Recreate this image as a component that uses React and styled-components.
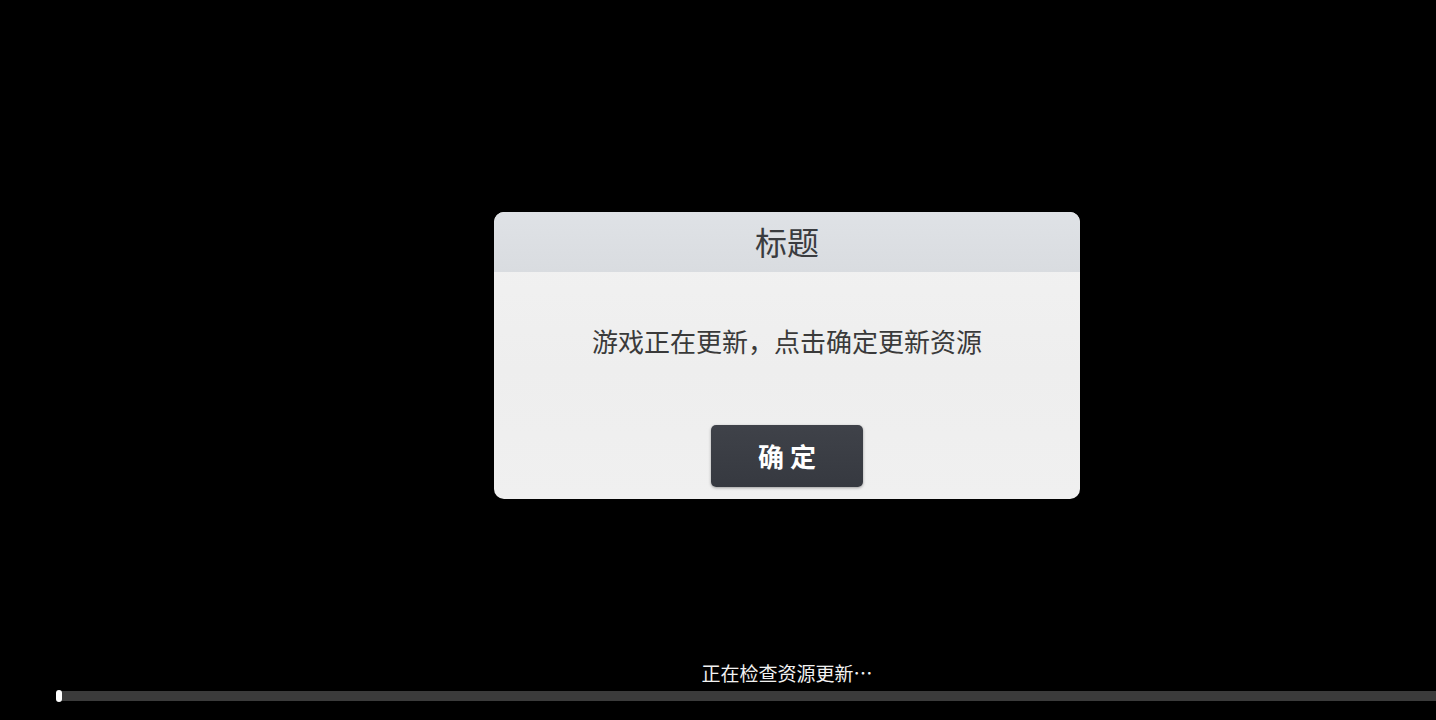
import React from "react";
import styled, { createGlobalStyle } from "styled-components";

const GlobalStyle = createGlobalStyle`
  html, body {
    margin: 0;
    padding: 0;
    background: #000;
    overflow: hidden;
  }
  body {
    font-family: "Noto Sans CJK SC", "Noto Sans", sans-serif;
  }
`;

const Viewport = styled.div`
  width: 100vw;
  height: 100vh;
  overflow: hidden;
`;

// 游戏画布比窗口宽，居中点在 787px
const Stage = styled.div`
  width: 1574px;
  height: 720px;
  display: flex;
  flex-direction: column;
  align-items: center;
  background: #000;
`;

const Dialog = styled.div`
  margin-top: 212px;
  width: 586px;
  height: 287px;
  border-radius: 10px;
  overflow: hidden;
  display: flex;
  flex-direction: column;
  background: linear-gradient(180deg, #f2f2f2 0%, #eeeeee 55%, #f0f0f0 100%);
`;

const Header = styled.div`
  height: 60px;
  flex-shrink: 0;
  display: flex;
  align-items: center;
  justify-content: center;
  background: linear-gradient(180deg, #dfe2e6 0%, #d9dce0 100%);
`;

const Title = styled.div`
  font-size: 32px;
  line-height: 40px;
  color: #3a3c3f;
  font-weight: 400;
  padding-bottom: 2px;
`;

const Body = styled.div`
  flex: 1;
  display: flex;
  flex-direction: column;
  align-items: center;
  padding-top: 51px;
`;

const Message = styled.div`
  font-size: 26px;
  line-height: 36px;
  color: #3a3a3a;
`;

const ConfirmButton = styled.button`
  margin-top: 66px;
  width: 152px;
  height: 62px;
  border: none;
  border-radius: 5px;
  background: linear-gradient(180deg, #3f4249 0%, #363940 100%);
  box-shadow: 0 1px 3px rgba(0, 0, 0, 0.35);
  color: #fff;
  font-family: "Noto Sans CJK SC", sans-serif;
  font-size: 26px;
  font-weight: 700;
  letter-spacing: 0;
  padding: 0 0 2px;
  cursor: pointer;
`;

const Footer = styled.div`
  margin-top: auto;
  padding-bottom: 19px;
  display: flex;
  flex-direction: column;
  align-items: center;
  gap: 6px;
`;

const Status = styled.div`
  font-size: 19px;
  line-height: 25px;
  color: #f2f2f2;
`;

const Track = styled.div`
  position: relative;
  width: 1460px;
  height: 10px;
  background: #3b3b3b;
`;

const Thumb = styled.div`
  position: absolute;
  top: -1px;
  width: 6px;
  height: 12px;
  border-radius: 3px;
  background: #fff;
`;

export default function App() {
  const progress = 0;
  return (
    <>
      <GlobalStyle />
      <Viewport>
        <Stage>
          <Dialog>
            <Header>
              <Title>标题</Title>
            </Header>
            <Body>
              <Message>游戏正在更新，点击确定更新资源</Message>
              <ConfirmButton>确 定</ConfirmButton>
            </Body>
          </Dialog>
          <Footer>
            <Status>正在检查资源更新…</Status>
            <Track>
              <Thumb style={{ left: `${progress * 1460 - 1}px` }} />
            </Track>
          </Footer>
        </Stage>
      </Viewport>
    </>
  );
}
